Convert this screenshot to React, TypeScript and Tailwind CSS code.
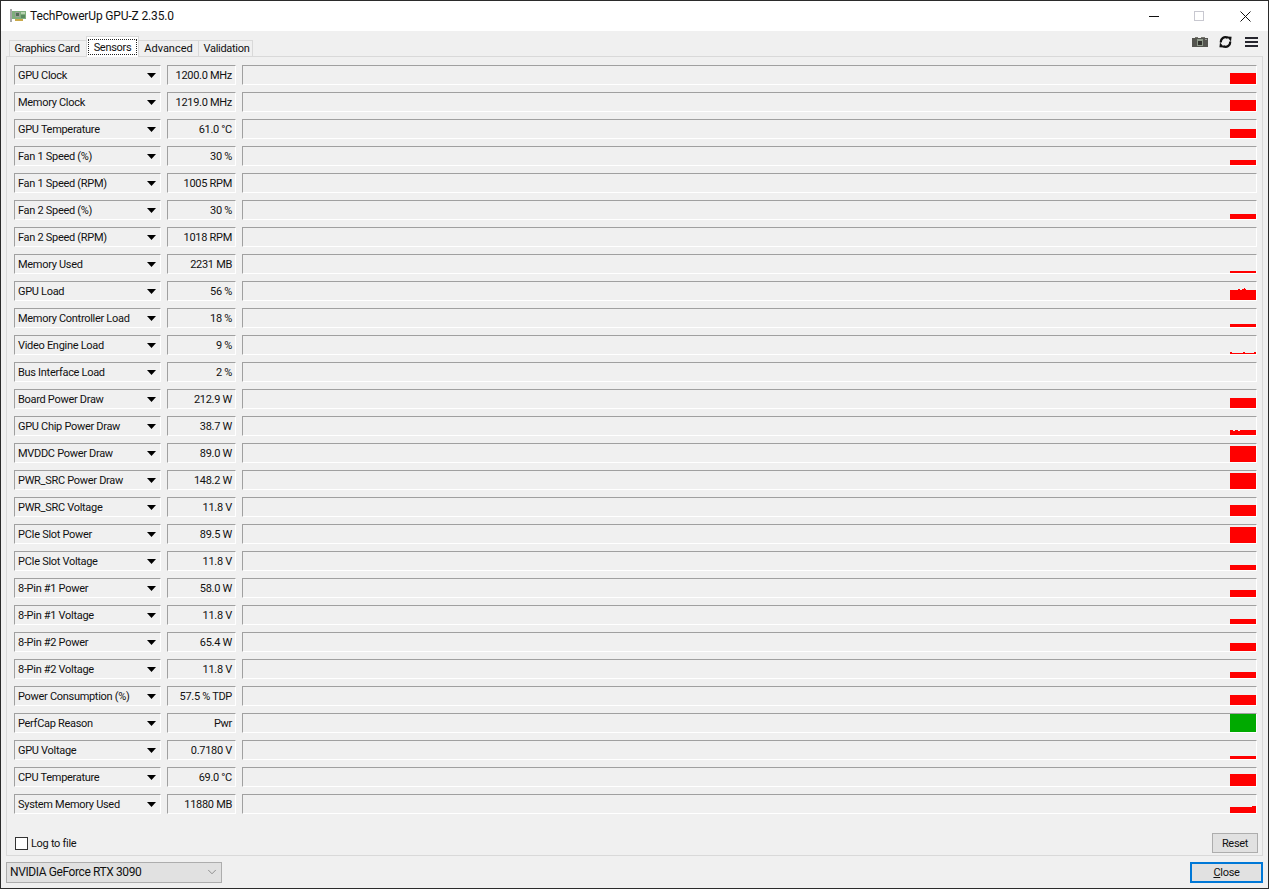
import { ChevronDown } from "lucide-react";

type Sensor = {
  name: string;
  value: string;
  bar?: number;
  bumps?: number[][];
  notches?: number[][];
  green?: boolean;
};

const sensors: Sensor[] = [
  { name: "GPU Clock", value: "1200.0 MHz", bar: 11 },
  { name: "Memory Clock", value: "1219.0 MHz", bar: 11 },
  { name: "GPU Temperature", value: "61.0 °C", bar: 9 },
  { name: "Fan 1 Speed (%)", value: "30 %", bar: 5 },
  { name: "Fan 1 Speed (RPM)", value: "1005 RPM" },
  { name: "Fan 2 Speed (%)", value: "30 %", bar: 5 },
  { name: "Fan 2 Speed (RPM)", value: "1018 RPM" },
  { name: "Memory Used", value: "2231 MB", bar: 2 },
  { name: "GPU Load", value: "56 %", bar: 10, bumps: [[8, 2, 1], [12, 4, 1], [14, 1, 2]] },
  { name: "Memory Controller Load", value: "18 %", bar: 3 },
  { name: "Video Engine Load", value: "9 %", bar: 1, bumps: [[0, 2, 1], [13, 2, 1], [24, 2, 1]] },
  { name: "Bus Interface Load", value: "2 %" },
  { name: "Board Power Draw", value: "212.9 W", bar: 10 },
  { name: "GPU Chip Power Draw", value: "38.7 W", bar: 5, notches: [[3, 2], [8, 2]] },
  { name: "MVDDC Power Draw", value: "89.0 W", bar: 16 },
  { name: "PWR_SRC Power Draw", value: "148.2 W", bar: 16 },
  { name: "PWR_SRC Voltage", value: "11.8 V", bar: 11 },
  { name: "PCIe Slot Power", value: "89.5 W", bar: 16 },
  { name: "PCIe Slot Voltage", value: "11.8 V", bar: 5 },
  { name: "8-Pin #1 Power", value: "58.0 W", bar: 7 },
  { name: "8-Pin #1 Voltage", value: "11.8 V", bar: 5 },
  { name: "8-Pin #2 Power", value: "65.4 W", bar: 8 },
  { name: "8-Pin #2 Voltage", value: "11.8 V", bar: 6 },
  { name: "Power Consumption (%)", value: "57.5 % TDP", bar: 10 },
  { name: "PerfCap Reason", value: "Pwr", bar: 18, green: true },
  { name: "GPU Voltage", value: "0.7180 V", bar: 3 },
  { name: "CPU Temperature", value: "69.0 °C", bar: 12 },
  { name: "System Memory Used", value: "11880 MB", bar: 6, bumps: [[22, 4, 1]] },
];

function Spark({ s }: { s: Sensor }) {
  if (!s.bar) return null;
  const color = s.green ? "#00aa00" : "#ff0000";
  const top = 18 - s.bar;
  return (
    <svg width="26" height="18" viewBox="0 0 26 18" className="block" shapeRendering="crispEdges">
      <rect x="0" y={top} width="26" height={s.bar} fill={color} />
      {s.bumps?.map(([x, w, h]) => (
        <rect key={x} x={x} y={top - h} width={w} height={h} fill={color} />
      ))}
      {s.notches?.map(([x, w]) => (
        <rect key={x} x={x} y={top} width={w} height="1" fill="#f0f0f0" />
      ))}
    </svg>
  );
}

function SensorRow({ s }: { s: Sensor }) {
  return (
    <div className="flex h-5 gap-1.5">
      <div className="flex w-[147px] items-center justify-between border-t border-l border-t-[#a0a0a0] border-l-[#a0a0a0] border-r border-b border-r-white border-b-white pr-[4px] pl-[3px]">
        <span className="whitespace-nowrap">{s.name}</span>
        <svg width="9" height="5" viewBox="0 0 9 5" className="mt-px">
          <path d="M0 0h9L4.5 5z" fill="#000" />
        </svg>
      </div>
      <div className="flex w-[69px] items-center justify-end border-t border-l border-t-[#a0a0a0] border-l-[#a0a0a0] border-r border-b border-r-white border-b-white pr-[3px]">
        <span className="whitespace-nowrap">{s.value}</span>
      </div>
      <div className="flex w-[1015px] items-end justify-end border-t border-l border-t-[#a0a0a0] border-l-[#a0a0a0] border-r border-b border-r-white border-b-white">
        <Spark s={s} />
      </div>
    </div>
  );
}

function AppIcon() {
  return (
    <svg width="16" height="14" viewBox="0 0 16 14" shapeRendering="crispEdges">
      <rect x="0" y="0" width="2" height="13" fill="#a8a8a8" />
      <rect x="2" y="2" width="14" height="8" fill="#7fae7c" />
      <rect x="5" y="3" width="5" height="5" fill="#9a9f96" />
      <rect x="6" y="4" width="3" height="3" fill="#4f6f55" />
      <rect x="11" y="3" width="4" height="2" fill="#b7d3b0" />
      <rect x="11" y="6" width="4" height="3" fill="#5a8a5f" />
      <rect x="5" y="10" width="8" height="2" fill="#c9a94a" />
    </svg>
  );
}

function Camera() {
  return (
    <svg width="16" height="10" viewBox="0 0 16 10" shapeRendering="crispEdges">
      <rect x="0" y="1" width="16" height="9" fill="#54544f" />
      <rect x="3" y="0" width="3" height="1" fill="#77776f" />
      <rect x="9" y="0" width="4" height="1" fill="#77776f" />
      <rect x="5" y="2" width="6" height="7" fill="#8f9a8a" />
      <rect x="6" y="4" width="4" height="4" fill="#33332f" />
      <rect x="13" y="2" width="2" height="1" fill="#9a9a9a" />
    </svg>
  );
}

function Refresh() {
  return (
    <svg width="13" height="12" viewBox="0 0 13 12" fill="none">
      <path d="M2 6.6A4.4 4.4 0 0 1 8.8 2" stroke="#111" strokeWidth="2.2" />
      <path d="M11 5.4A4.4 4.4 0 0 1 4.2 10" stroke="#111" strokeWidth="2.2" />
      <path d="M7.6 0.6l5 0.2-0.6 4.6z" fill="#111" />
      <path d="M5.4 11.4l-5-0.2 0.6-4.6z" fill="#111" />
    </svg>
  );
}

function Hamburger() {
  return (
    <div className="flex w-[13px] flex-col gap-[2px]">
      <div className="h-[2px] bg-[#26262e]" />
      <div className="h-[2px] bg-[#26262e]" />
      <div className="h-[2px] bg-[#26262e]" />
    </div>
  );
}

export default function App() {
  return (
    <div className="flex h-[889px] w-[1269px] flex-col border border-[#2b2b2b] bg-[#f0f0f0] font-['Roboto',sans-serif] text-[11px] leading-none tracking-[-0.3px] text-[#111]">
      {/* title bar */}
      <div className="flex h-[30px] shrink-0 items-center bg-white">
        <div className="ml-[9px] flex items-center gap-[4px]">
          <AppIcon />
          <span className="text-[12px] tracking-[-0.15px]">TechPowerUp GPU-Z 2.35.0</span>
        </div>
        <div className="ml-auto flex items-center">
          <svg width="10" height="10" viewBox="0 0 10 10" className="mr-[35px]" shapeRendering="crispEdges">
            <rect x="0" y="5" width="10" height="1" fill="#111" />
          </svg>
          <div className="mr-[36px] size-[10px] border border-[#c8c8d0]" />
          <svg width="11" height="11" viewBox="0 0 11 11" className="mr-[17px]">
            <path d="M.5.5l10 10M10.5.5l-10 10" stroke="#111" strokeWidth="1" />
          </svg>
        </div>
      </div>

      {/* tabs */}
      <div className="flex h-[25px] shrink-0 items-end justify-between pl-[8px] pr-[10px]">
        <div className="flex items-end">
          <div className="flex h-[16px] w-[77px] items-center justify-center border-t border-l border-[#d9d9d9] pr-[2px]">Graphics Card</div>
          <div className="relative z-10 -mb-px flex h-[21px] w-[53px] items-center justify-center border border-b-0 border-[#d9d9d9] bg-white">
            <span className="flex h-[16px] w-[49px] items-start justify-center border border-dotted border-[#222] pt-[2px]">Sensors</span>
          </div>
          <div className="flex h-[16px] w-[59px] items-center justify-center border-t border-[#d9d9d9] tracking-[0px]">Advanced</div>
          <div className="flex h-[16px] w-[55px] items-center justify-center border-t border-x border-[#d9d9d9] pl-[2px]">Validation</div>
        </div>
        <div className="mb-[8px] flex items-center">
          <div className="mr-[11px]"><Camera /></div>
          <div className="mr-[13px]"><Refresh /></div>
          <Hamburger />
        </div>
      </div>

      {/* sensor panel */}
      <div className="mx-[5px] flex h-[800px] shrink-0 flex-col border border-[#d9d9d9] pl-[7px] pt-[8px]">
        <div className="flex flex-col gap-[7px]">
          {sensors.map((s) => (
            <SensorRow key={s.name} s={s} />
          ))}
        </div>
        <div className="mt-[19px] flex items-center justify-between pr-[4px]">
          <label className="ml-[1px] flex items-center gap-[3px]">
            <span className="size-[13px] border border-[#333] bg-white" />
            <span>Log to file</span>
          </label>
          <button className="flex h-[20px] w-[46px] items-center justify-center border border-[#adadad] bg-[#e1e1e1]">Reset</button>
        </div>
      </div>

      {/* footer */}
      <div className="flex flex-1 items-center justify-between pl-[5px] pr-[5px]">
        <div className="flex h-[21px] w-[216px] items-center justify-between border border-[#adadad] bg-[#e1e1e1] pl-[3px] pr-[2px]">
          <span className="text-[12px] tracking-[-0.4px]">NVIDIA GeForce RTX 3090</span>
          <ChevronDown size={14} strokeWidth={1} color="#555" />
        </div>
        <button className="flex h-[21px] w-[73px] items-center justify-center border-2 border-[#0078d7] bg-[#e1e1e1]">
          <span><span className="underline">C</span>lose</span>
        </button>
      </div>
    </div>
  );
}
